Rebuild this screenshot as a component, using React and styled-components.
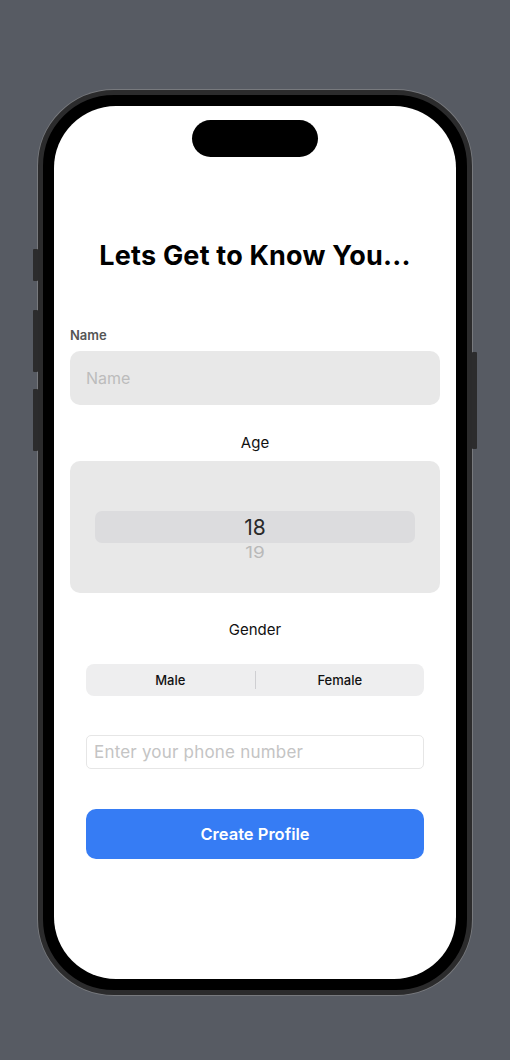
import React, {useState} from 'react';
import styled, {createGlobalStyle} from 'styled-components';

const GlobalStyle = createGlobalStyle`
  html, body {
    margin: 0;
    padding: 0;
    background: #575b63;
  }
  body {
    font-family: Inter, "Noto Sans", "Liberation Sans", sans-serif;
  }
`;

const Page = styled.div`
  width: 510px;
  height: 1060px;
  display: flex;
  justify-content: center;
  padding-top: 90px;
  box-sizing: border-box;
`;

const Phone = styled.div`
  position: relative;
  width: 434px;
  height: 905px;
  box-sizing: border-box;
  border-radius: 76px;
  background: #000;
  border: 5px solid #2b2b2c;
  box-shadow: 0 0 0 1px #77797d;
  padding: 11px;
`;

const SideButton = styled.div`
  position: absolute;
  width: 5px;
  background: #2c2c2d;
  border-radius: 1px;
  ${p => p.right ? 'right: -10px;' : 'left: -10px;'}
  top: ${p => p.top}px;
  height: ${p => p.h}px;
`;

const Screen = styled.div`
  width: 100%;
  height: 100%;
  background: #fff;
  border-radius: 62px;
  display: flex;
  flex-direction: column;
  align-items: center;
  padding: 14px 16px 0;
  box-sizing: border-box;
`;

const Island = styled.div`
  width: 126px;
  height: 37px;
  border-radius: 19px;
  background: #000;
  flex-shrink: 0;
`;

const Title = styled.h1`
  margin: 83px 0 0;
  font-size: 27px;
  line-height: 32px;
  font-weight: 700;
  color: #000;
  letter-spacing: 0.2px;
`;

const FieldLabel = styled.div`
  align-self: stretch;
  margin-top: 55px;
  font-size: 13px;
  line-height: 16px;
  font-weight: 600;
  color: #555;
`;

const NameInput = styled.input`
  align-self: stretch;
  margin-top: 8px;
  height: 54px;
  box-sizing: border-box;
  border: none;
  border-radius: 10px;
  background: #e8e8e8;
  padding: 0 16px;
  font-family: inherit;
  font-size: 16px;
  color: #222;
  outline: none;
  &::placeholder { color: #bcbcbc; }
`;

const SectionLabel = styled.div`
  margin-top: ${p => p.mt}px;
  font-size: 15px;
  line-height: 20px;
  color: #111;
`;

const Picker = styled.div`
  align-self: stretch;
  margin-top: 8px;
  height: 132px;
  border-radius: 10px;
  background: #e8e8e8;
  display: flex;
  flex-direction: column;
  align-items: stretch;
  padding: 50px 25px 0;
  box-sizing: border-box;
`;

const Selected = styled.div`
  height: 32px;
  border-radius: 7px;
  background: #dcdcde;
  display: flex;
  align-items: center;
  justify-content: center;
  font-size: 21px;
  color: #2a2a2a;
`;

const NextValue = styled.div`
  text-align: center;
  font-size: 19px;
  line-height: 22px;
  color: #b9b9b9;
  transform: scaleY(0.82);
  transform-origin: top;
  margin-top: 1px;
`;

const Segmented = styled.div`
  align-self: stretch;
  margin: 24px 16px 0;
  height: 32px;
  border-radius: 8px;
  background: #eeeeef;
  display: flex;
  align-items: center;
`;

const Segment = styled.button`
  flex: 1;
  height: 100%;
  border: none;
  background: ${p => p.active ? '#fff' : 'transparent'};
  border-radius: 7px;
  font-family: inherit;
  font-size: 13px;
  font-weight: 500;
  color: #111;
  cursor: pointer;
`;

const Divider = styled.div`
  width: 1px;
  height: 18px;
  background: #cfcfd2;
`;

const PhoneInput = styled.input`
  align-self: stretch;
  margin: 39px 16px 0;
  height: 34px;
  box-sizing: border-box;
  border: 1px solid #e6e6e6;
  border-radius: 5px;
  background: #fff;
  padding: 0 7px;
  font-family: inherit;
  font-size: 17px;
  letter-spacing: 0.2px;
  outline: none;
  &::placeholder { color: #c4c4c4; }
`;

const PrimaryButton = styled.button`
  align-self: stretch;
  margin: 40px 16px 0;
  height: 50px;
  border: none;
  border-radius: 10px;
  background: #367cf4;
  color: #fff;
  font-family: inherit;
  font-size: 16.5px;
  font-weight: 600;
  cursor: pointer;
`;

const App = () => {
  const [gender, setGender] = useState('')

  return (
    <Page>
      <GlobalStyle />
      <Phone>
        <SideButton top={154} h={32} />
        <SideButton top={215} h={62} />
        <SideButton top={294} h={62} />
        <SideButton right top={257} h={97} />
        <Screen>
          <Island />
          <Title>Lets Get to Know You...</Title>
          <FieldLabel>Name</FieldLabel>
          <NameInput placeholder="Name" />
          <SectionLabel mt={28}>Age</SectionLabel>
          <Picker>
            <Selected>18</Selected>
            <NextValue>19</NextValue>
          </Picker>
          <SectionLabel mt={27}>Gender</SectionLabel>
          <Segmented>
            <Segment active={gender === 'male'} onClick={() => setGender('male')}>Male</Segment>
            <Divider />
            <Segment active={gender === 'female'} onClick={() => setGender('female')}>Female</Segment>
          </Segmented>
          <PhoneInput placeholder="Enter your phone number" />
          <PrimaryButton>Create Profile</PrimaryButton>
        </Screen>
      </Phone>
    </Page>
  );
};

export default App;
